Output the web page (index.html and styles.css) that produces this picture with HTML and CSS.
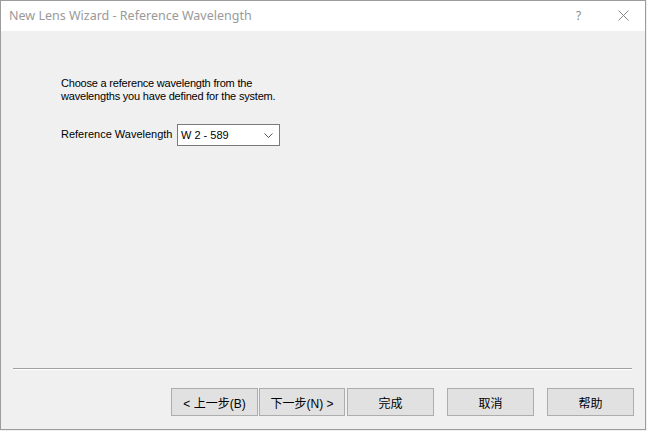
FILE: index.html
```html
<!DOCTYPE html>
<html>
<head>
<meta charset="utf-8">
<link rel="stylesheet" href="styles.css">
</head>
<body>
<div class="window">
  <div class="titlebar">
    <span class="title">New Lens Wizard - Reference Wavelength</span>
    <span class="help">?</span>
    <span class="close">
      <svg width="11" height="11" viewBox="0 0 11 11"><path d="M0.5 0.5 L10.5 10.5 M10.5 0.5 L0.5 10.5" stroke="#8a8a8a" stroke-width="1" fill="none"/></svg>
    </span>
  </div>
  <div class="content">
    <p class="intro">Choose a reference wavelength from the<br>wavelengths you have defined for the system.</p>
    <div class="field">
      <span class="label">Reference Wavelength</span>
      <div class="combo">
        <span class="value">W 2 - 589</span>
        <svg class="chev" width="9" height="5" viewBox="0 0 9 5"><path d="M0.5 0.5 L4.5 4.5 L8.5 0.5" stroke="#555" stroke-width="1" fill="none"/></svg>
      </div>
    </div>
  </div>
  <div class="footer">
    <div class="sep"></div>
    <div class="buttons">
      <button class="btn b1">&lt; 上一步(B)</button>
      <button class="btn b2">下一步(N) &gt;</button>
      <button class="btn b3">完成</button>
      <button class="btn b4">取消</button>
      <button class="btn b5">帮助</button>
    </div>
  </div>
</div>
</body>
</html>
```
FILE: styles.css
```css
html, body {
  margin: 0;
  padding: 0;
  background: #f0f0f0;
}
.window {
  width: 646px;
  height: 430px;
  box-sizing: border-box;
  border: 1px solid #9c9c9c;
  background: #f0f0f0;
  display: flex;
  flex-direction: column;
}
.titlebar {
  height: 30px;
  background: #ffffff;
  display: flex;
  align-items: center;
  position: relative;
  flex: none;
}
.title {
  margin-left: 8px;
  font-family: "Noto Sans", "Open Sans", sans-serif;
  font-size: 12.5px;
  color: #9a9a9a;
  margin-top: -1px;
}
.help {
  position: absolute;
  left: 575px;
  top: 6px;
  font-family: "Noto Sans", sans-serif;
  font-size: 12px;
  color: #8a8a8a;
}
.close {
  position: absolute;
  left: 617px;
  top: 9px;
  width: 11px;
  height: 11px;
  display: block;
}
.close svg { display: block; }
.content {
  flex: 1;
  padding-left: 60px;
  padding-top: 46px;
  font-family: "Liberation Sans", Arial, sans-serif;
  font-size: 11px;
  color: #000;
}
.intro {
  margin: 0;
  line-height: 13px;
  letter-spacing: -0.2px;
}
.field {
  margin-top: 21px;
  display: flex;
  align-items: center;
}
.label {
  width: 116px;
  margin-top: -3px;
}
.combo {
  width: 103px;
  height: 22px;
  box-sizing: border-box;
  border: 1px solid #7a7a7a;
  background: #ffffff;
  display: flex;
  align-items: center;
  justify-content: space-between;
  padding: 0 6px 0 3px;
  font-size: 11px;
}
.value { color: #000; }
.chev { display: block; }
.footer {
  flex: none;
  padding-bottom: 13px;
}
.sep {
  margin: 0 13px 0 12px;
  height: 1px;
  background: #a0a0a0;
  border-bottom: 1px solid #ffffff;
}
.buttons {
  margin-top: 18px;
  display: flex;
  justify-content: flex-end;
  padding-right: 11px;
}
.btn {
  width: 87px;
  height: 28px;
  box-sizing: border-box;
  border: 1px solid #adadad;
  background: #e1e1e1;
  font-family: "Noto Sans CJK SC", "Liberation Sans", sans-serif;
  font-size: 12px;
  color: #000;
  padding: 0;
  margin: 0;
}
.b1 { font-family: "Liberation Sans", "Noto Sans CJK SC", sans-serif; }
.b2 { margin-left: 1px; width: 86px; font-family: "Liberation Sans", "Noto Sans CJK SC", sans-serif; }
.b3 { margin-left: 2px; }
.b4 { margin-left: 13px; }
.b5 { margin-left: 13px; }
```
